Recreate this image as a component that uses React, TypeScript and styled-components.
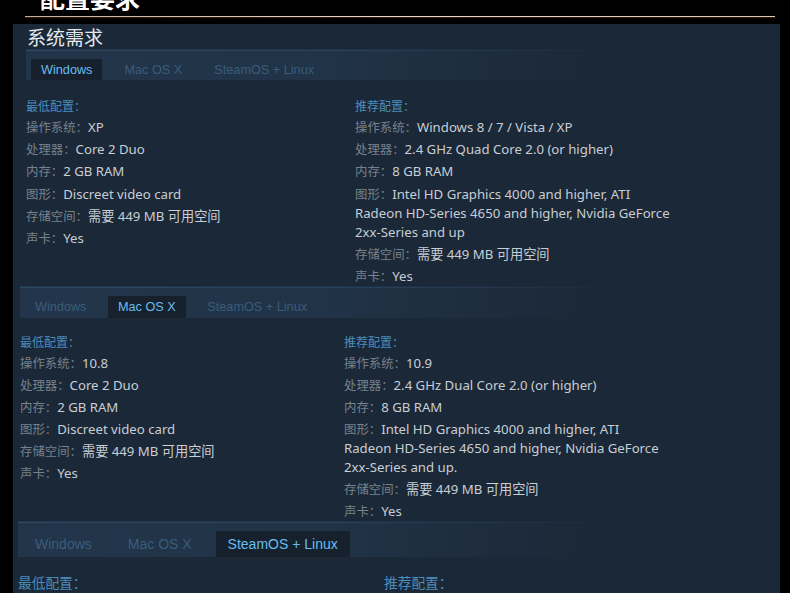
import React from "react";
import styled, { createGlobalStyle } from "styled-components";

const Global = createGlobalStyle`
  html, body { margin: 0; padding: 0; background: #000; overflow: hidden; }
  body { font-family: "Noto Sans", "Noto Sans CJK SC", sans-serif; }
`;

const Page = styled.div`
  width: 790px;
  height: 593px;
  background: #000;
  overflow: hidden;
`;

const TopHeading = styled.div`
  height: 10px;
  padding-left: 40px;
  display: flex;
  align-items: flex-end;
`;

const TopHeadingText = styled.h1`
  margin: 0;
  font-family: "Noto Sans CJK SC", sans-serif;
  font-size: 25px;
  line-height: 25px;
  font-weight: 700;
  color: #ffffff;
  flex-shrink: 0;
`;

const Divider = styled.div`
  margin: 6px 15px 0 25px;
  height: 1px;
  background: linear-gradient(to right, #bfae9c, #e6dace 50%, #d6c6b6);
  box-shadow: 0 1px 1px #3a1f12;
`;

const Panel = styled.div`
  margin: 7px 10px 0 13px;
  height: 569px;
  background: #1b2838;
  display: flex;
  flex-direction: column;
`;

type SectionCfg = {
  inset: number;
  stripH: number;
  tabTop: number;
  tabH: number;
  tabFont: number;
  tabPadX: number;
  tabGap: number;
  contentTop: number;
  colWidth: number;
  recWidth: number;
  labelFont: number;
  valueFont: number;
  headFont: number;
  lineH: number;
  rowGap: number;
};

const Section = styled.section<{ $inset: number }>`
  margin-left: ${(p) => p.$inset}px;
  display: flex;
  flex-direction: column;
`;

const Title = styled.h2`
  margin: 0;
  padding-left: 1px;
  font-family: "Noto Sans CJK SC", sans-serif;
  font-weight: 400;
  font-size: 19px;
  line-height: 25px;
  color: #e4eaee;
`;

const TabStrip = styled.div<{ $h: number; $top: number; $gap: number }>`
  height: ${(p) => p.$h}px;
  padding: ${(p) => p.$top}px 0 0 5px;
  box-sizing: border-box;
  display: flex;
  align-items: flex-start;
  gap: ${(p) => p.$gap}px;
  border-top: 1px solid transparent;
  background:
    linear-gradient(to right, #2d4a63, #27405a 45%, rgba(27, 40, 56, 0) 80%) top / 100% 1px no-repeat,
    linear-gradient(to right, #22354a, #213347 40%, rgba(27, 40, 56, 0) 75%);
`;

const Tab = styled.div<{ $active: boolean; $h: number; $font: number; $padX: number }>`
  height: ${(p) => p.$h}px;
  padding: 0 ${(p) => p.$padX}px;
  display: flex;
  align-items: center;
  font-family: "Liberation Sans", Arial, sans-serif;
  font-size: ${(p) => p.$font}px;
  white-space: nowrap;
  color: ${(p) => (p.$active ? "#66bdf0" : "#3a5d7b")};
  background: ${(p) => (p.$active ? "#17212d" : "transparent")};
`;

const Content = styled.div<{ $top: number; $col: number }>`
  margin-top: ${(p) => p.$top}px;
  display: grid;
  grid-template-columns: ${(p) => p.$col}px auto;
  align-items: start;
`;

const Column = styled.div<{ $max: number }>`
  display: flex;
  flex-direction: column;
  max-width: ${(p) => p.$max}px;
`;

const ColHead = styled.div<{ $font: number; $lh: number }>`
  font-family: "Noto Sans CJK SC", sans-serif;
  font-size: ${(p) => p.$font}px;
  line-height: ${(p) => p.$lh}px;
  color: #4a8dbd;
`;

const Row = styled.div<{ $font: number; $lh: number; $gap: number }>`
  margin-top: ${(p) => p.$gap}px;
  font-size: ${(p) => p.$font}px;
  line-height: ${(p) => p.$lh}px;
  color: #c8ced4;
`;

const Label = styled.span<{ $font: number }>`
  font-family: "Noto Sans CJK SC", sans-serif;
  font-size: ${(p) => p.$font}px;
  line-height: 1;
  color: #77828c;
`;

type Spec = [string, string];

const tabs = ["Windows", "Mac OS X", "SteamOS + Linux"];

const data: {
  active: number;
  title?: string;
  cfg: SectionCfg;
  min: Spec[];
  rec: Spec[];
}[] = [
  {
    active: 0,
    title: "系统需求",
    cfg: {
      inset: 13, stripH: 31, tabTop: 9, tabH: 21, tabFont: 12.7, tabPadX: 10, tabGap: 12,
      contentTop: 15.5, colWidth: 329, recWidth: 316, labelFont: 12.4, valueFont: 13.2,
      headFont: 12, lineH: 19, rowGap: 3.3,
    },
    min: [
      ["操作系统", "XP"],
      ["处理器", "Core 2 Duo"],
      ["内存", "2 GB RAM"],
      ["图形", "Discreet video card"],
      ["存储空间", "需要 449 MB 可用空间"],
      ["声卡", "Yes"],
    ],
    rec: [
      ["操作系统", "Windows 8 / 7 / Vista / XP"],
      ["处理器", "2.4 GHz Quad Core 2.0 (or higher)"],
      ["内存", "8 GB RAM"],
      ["图形", "Intel HD Graphics 4000 and higher, ATI Radeon HD-Series 4650 and higher, Nvidia GeForce 2xx-Series and up"],
      ["存储空间", "需要 449 MB 可用空间"],
      ["声卡", "Yes"],
    ],
  },
  {
    active: 1,
    cfg: {
      inset: 7, stripH: 32, tabTop: 9, tabH: 22, tabFont: 12.7, tabPadX: 10, tabGap: 11.5,
      contentTop: 13.5, colWidth: 324, recWidth: 316, labelFont: 12.4, valueFont: 13.2,
      headFont: 12, lineH: 19, rowGap: 3,
    },
    min: [
      ["操作系统", "10.8"],
      ["处理器", "Core 2 Duo"],
      ["内存", "2 GB RAM"],
      ["图形", "Discreet video card"],
      ["存储空间", "需要 449 MB 可用空间"],
      ["声卡", "Yes"],
    ],
    rec: [
      ["操作系统", "10.9"],
      ["处理器", "2.4 GHz Dual Core 2.0 (or higher)"],
      ["内存", "8 GB RAM"],
      ["图形", "Intel HD Graphics 4000 and higher, ATI Radeon HD-Series 4650 and higher, Nvidia GeForce 2xx-Series and up."],
      ["存储空间", "需要 449 MB 可用空间"],
      ["声卡", "Yes"],
    ],
  },
  {
    active: 2,
    cfg: {
      inset: 5, stripH: 36, tabTop: 9, tabH: 26, tabFont: 14, tabPadX: 12, tabGap: 12,
      contentTop: 15.5, colWidth: 366, recWidth: 360, labelFont: 14, valueFont: 15,
      headFont: 13.7, lineH: 21, rowGap: 3.6,
    },
    min: [
      ["操作系统", "Ubuntu 12.04"],
      ["处理器", "Core 2 Duo"],
      ["内存", "2 GB RAM"],
    ],
    rec: [
      ["操作系统", "Ubuntu 14.04"],
      ["处理器", "2.4 GHz Dual Core 2.0 (or higher)"],
      ["内存", "8 GB RAM"],
    ],
  },
];

function SpecColumn({ head, rows, cfg, max }: { head: string; rows: Spec[]; cfg: SectionCfg; max: number }) {
  return (
    <Column $max={max}>
      <ColHead $font={cfg.headFont} $lh={cfg.lineH}>{head}</ColHead>
      {rows.map(([k, v]) => (
        <Row key={k} $font={cfg.valueFont} $lh={cfg.lineH} $gap={cfg.rowGap}>
          <Label $font={cfg.labelFont}>{k}：</Label>
          {v}
        </Row>
      ))}
    </Column>
  );
}

export default function App() {
  return (
    <Page>
      <Global />
      <TopHeading>
        <TopHeadingText>配置要求</TopHeadingText>
      </TopHeading>
      <Divider />
      <Panel>
        {data.map((s, i) => (
          <Section key={i} $inset={s.cfg.inset}>
            {s.title && <Title>{s.title}</Title>}
            <TabStrip $h={s.cfg.stripH} $top={s.cfg.tabTop} $gap={s.cfg.tabGap}>
              {tabs.map((t, j) => (
                <Tab key={t} $active={j === s.active} $h={s.cfg.tabH} $font={s.cfg.tabFont} $padX={s.cfg.tabPadX}>
                  {t}
                </Tab>
              ))}
            </TabStrip>
            <Content $top={s.cfg.contentTop} $col={s.cfg.colWidth}>
              <SpecColumn head="最低配置：" rows={s.min} cfg={s.cfg} max={s.cfg.colWidth - 10} />
              <SpecColumn head="推荐配置：" rows={s.rec} cfg={s.cfg} max={s.cfg.recWidth} />
            </Content>
          </Section>
        ))}
      </Panel>
    </Page>
  );
}
